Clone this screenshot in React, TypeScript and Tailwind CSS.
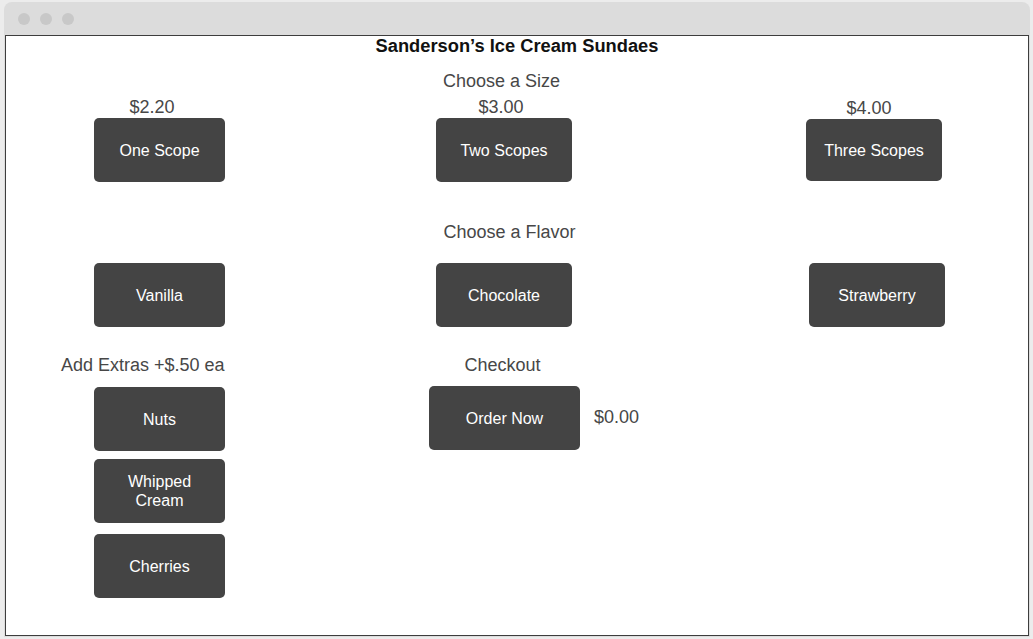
const font = { fontFamily: '"Liberation Sans", Arial, sans-serif' };

function Btn({
  children,
  w = "w-[131px]",
  h = "h-[64px]",
}: {
  children: React.ReactNode;
  w?: string;
  h?: string;
}) {
  return (
    <button
      className={`${w} ${h} flex shrink-0 items-center justify-center rounded-[5px] bg-[#444444] text-center text-[16px] leading-[19px] text-white`}
    >
      {children}
    </button>
  );
}

function Label({ children, className = "" }: { children: React.ReactNode; className?: string }) {
  return (
    <div className={`text-[18px] leading-[20px] text-[#474747] whitespace-nowrap ${className}`}>
      {children}
    </div>
  );
}

export default function App() {
  return (
    <div className="min-h-screen bg-[#ececec] pl-[4px] pt-[2px]" style={font}>
      <div className="w-[1026px] rounded-t-[8px] bg-[#dcdcdc] px-px pb-px">
        <div className="flex h-[33px] items-center gap-[10px] pl-[13px]">
          <span className="h-[12px] w-[12px] rounded-full bg-[#c8c8c8]" />
          <span className="h-[12px] w-[12px] rounded-full bg-[#c8c8c8]" />
          <span className="h-[12px] w-[12px] rounded-full bg-[#c8c8c8]" />
        </div>

        <div className="h-[601px] w-[1024px] border border-[#3d3d3d] bg-white">
          <h1 className="text-center text-[18.3px] font-bold leading-[20px] text-[#111111]">
            Sanderson’s Ice Cream Sundaes
          </h1>

          <Label className="mt-[15px] pr-[31px] text-center">Choose a Size</Label>

          {/* sizes */}
          <div className="mt-[6px] flex items-start">
            <div className="ml-[88px] flex flex-col items-center">
              <Label className="pr-[15px]">$2.20</Label>
              <div className="mt-px">
                <Btn>One Scope</Btn>
              </div>
            </div>
            <div className="ml-[211px] flex flex-col items-center">
              <Label className="pr-[6px]">$3.00</Label>
              <div className="mt-px">
                <Btn w="w-[136px]">Two Scopes</Btn>
              </div>
            </div>
            <div className="ml-[234px] flex flex-col items-center">
              <Label className="mt-px pr-[10px]">$4.00</Label>
              <div className="mt-px">
                <Btn w="w-[136px]" h="h-[62px]">Three Scopes</Btn>
              </div>
            </div>
          </div>

          <Label className="mt-[40px] pr-[15px] text-center">Choose a Flavor</Label>

          {/* flavors */}
          <div className="mt-[21px] flex">
            <div className="ml-[88px]">
              <Btn>Vanilla</Btn>
            </div>
            <div className="ml-[211px]">
              <Btn w="w-[136px]">Chocolate</Btn>
            </div>
            <div className="ml-[237px]">
              <Btn w="w-[136px]">Strawberry</Btn>
            </div>
          </div>

          {/* extras + checkout */}
          <div className="mt-[28px] flex items-start">
            <div className="ml-[55px] flex w-[200px] flex-col">
              <Label className="text-[18.4px]">Add Extras +$.50 ea</Label>
              <div className="ml-[33px] mt-[12px] flex flex-col">
                <Btn>Nuts</Btn>
                <div className="mt-[8px]">
                  <Btn>
                    Whipped
                    <br />
                    Cream
                  </Btn>
                </div>
                <div className="mt-[11px]">
                  <Btn>Cherries</Btn>
                </div>
              </div>
            </div>
            <div className="ml-[168px] flex flex-col">
              <Label className="w-[151px] pr-[4px] text-center">Checkout</Label>
              <div className="mt-[11px] flex items-center">
                <Btn w="w-[151px]">Order Now</Btn>
                <Label className="ml-[14px] -mt-[2px]">$0.00</Label>
              </div>
            </div>
          </div>
        </div>
      </div>
    </div>
  );
}
